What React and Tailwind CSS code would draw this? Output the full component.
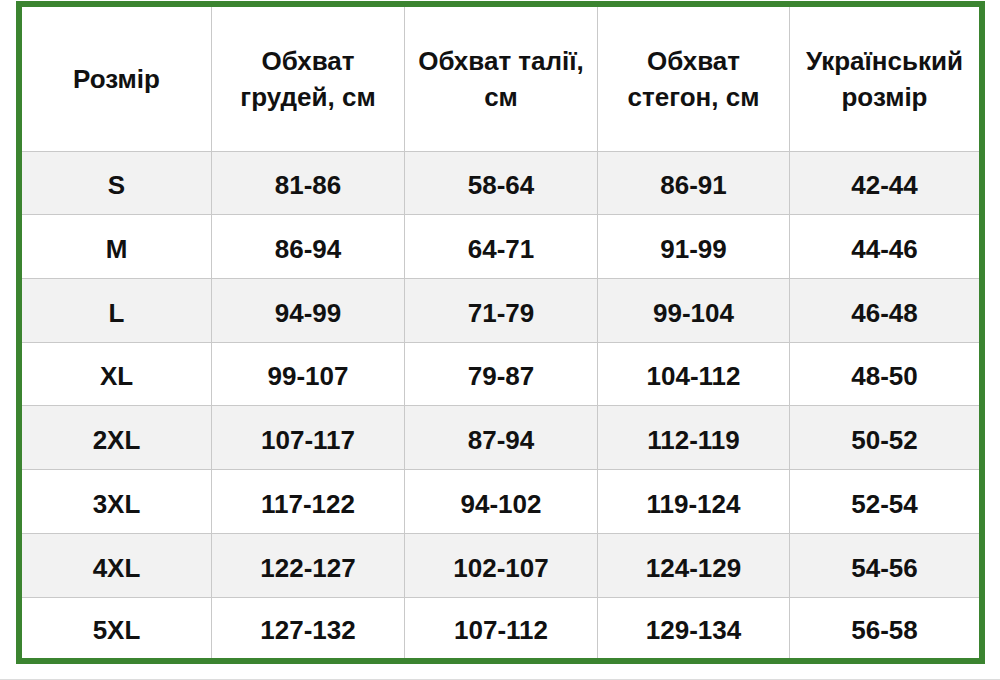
import React from "react";

const header = [
  ["Розмір"],
  ["Обхват", "грудей, см"],
  ["Обхват талії,", "см"],
  ["Обхват", "стегон, см"],
  ["Український", "розмір"],
];

const rows = [
  ["S", "81-86", "58-64", "86-91", "42-44"],
  ["M", "86-94", "64-71", "91-99", "44-46"],
  ["L", "94-99", "71-79", "99-104", "46-48"],
  ["XL", "99-107", "79-87", "104-112", "48-50"],
  ["2XL", "107-117", "87-94", "112-119", "50-52"],
  ["3XL", "117-122", "94-102", "119-124", "52-54"],
  ["4XL", "122-127", "102-107", "124-129", "54-56"],
  ["5XL", "127-132", "107-112", "129-134", "56-58"],
];

const heights = ["h-[63px]", "h-[64px]", "h-[64px]", "h-[63px]", "h-[64px]", "h-[64px]", "h-[64px]", "h-[60px]"];

export default function App() {
  return (
    <div
      className="w-[1000px] h-[680px] bg-white flex flex-col text-[#111]"
      style={{ fontFamily: '"Liberation Sans", Arial, sans-serif' }}
    >
      <div className="pl-[16px] pt-[1px]">
        <div className="w-[969px] h-[663px] border-[6px] border-[#3b8430] bg-white grid grid-cols-[190px_193px_193px_192px_189px] font-bold text-[26px]">
          {header.map((h, i) => (
            <div
              key={"h" + i}
              className={`h-[145px] flex flex-col items-center justify-center text-center leading-[36px] border-b border-[#c9c9c9] ${i < 4 ? "border-r" : ""}`}
            >
              {h.map((line, j) => (
                <div key={j}>{line}</div>
              ))}
            </div>
          ))}
          {rows.map((r, ri) =>
            r.map((c, ci) => (
              <div
                key={ri + "-" + ci}
                className={`${heights[ri]} pt-[5px] flex items-center justify-center border-[#c9c9c9] ${ri % 2 === 0 ? "bg-[#f2f2f2]" : "bg-white"} ${ci < 4 ? "border-r" : ""} ${ri < 7 ? "border-b" : ""}`}
              >
                {c}
              </div>
            ))
          )}
        </div>
      </div>
      <div className="flex-1" />
      <div className="h-[1px] bg-[#dcdcdc]" />
    </div>
  );
}
